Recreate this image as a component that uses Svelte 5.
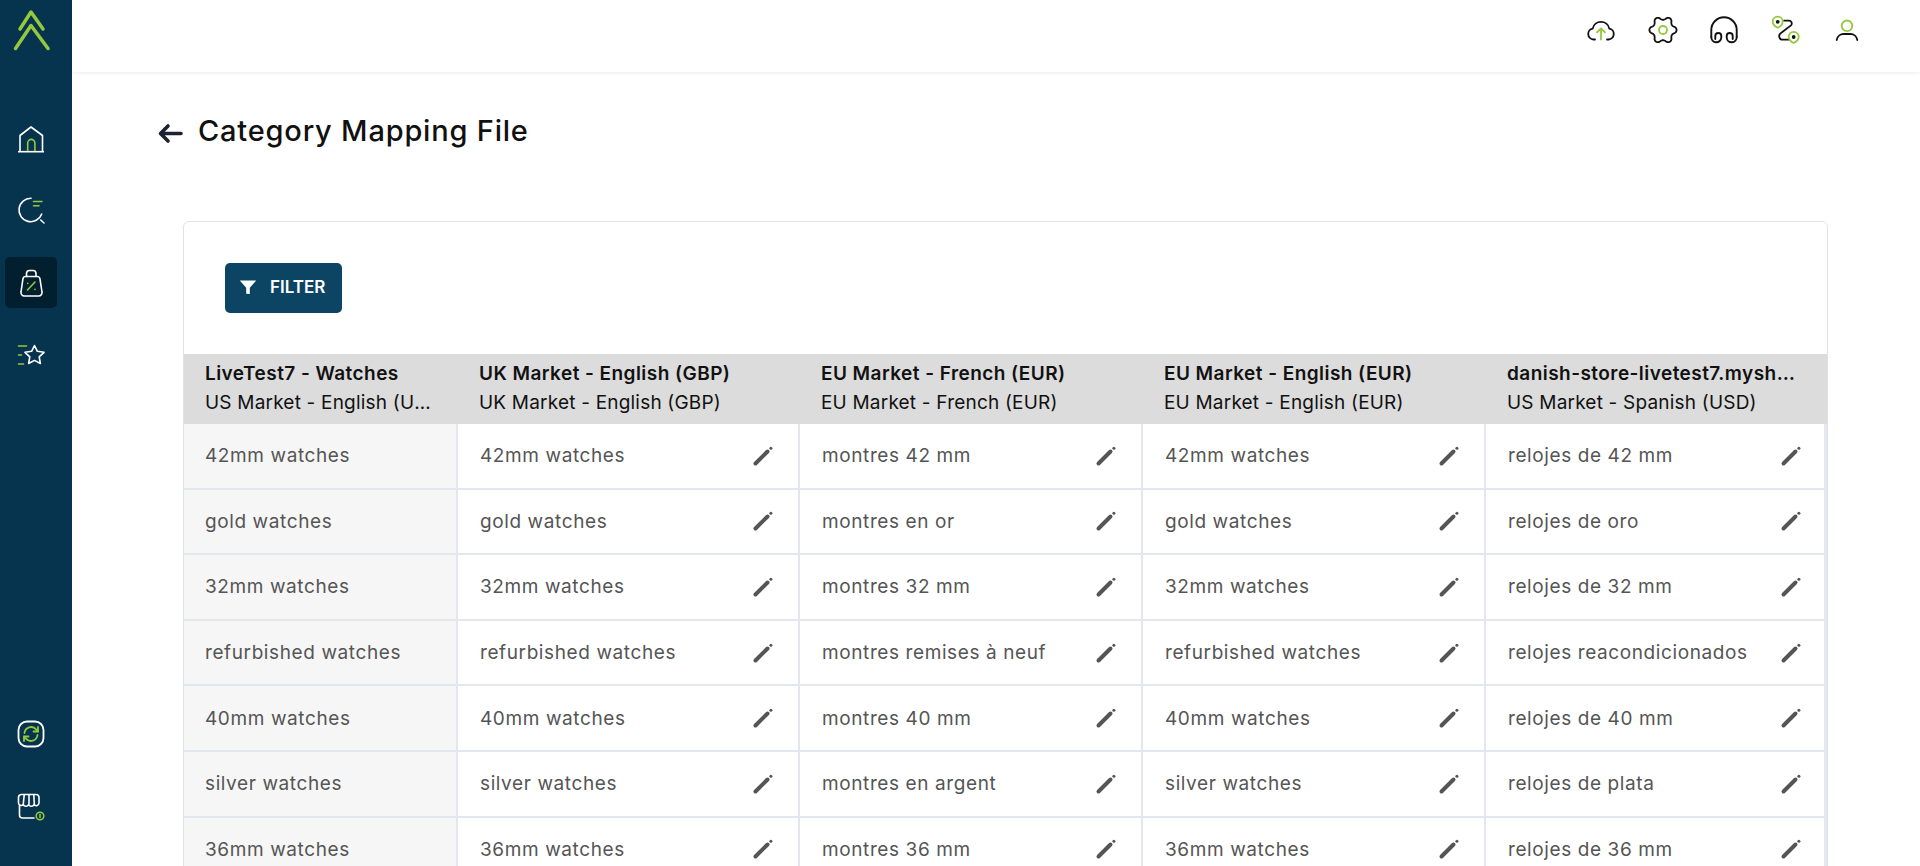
<script>
  const head = [
    ['LiveTest7 - Watches', 'US Market - English (USD)'],
    ['UK Market - English (GBP)', 'UK Market - English (GBP)'],
    ['EU Market - French (EUR)', 'EU Market - French (EUR)'],
    ['EU Market - English (EUR)', 'EU Market - English (EUR)'],
    ['danish-store-livetest7.myshopify.com', 'US Market - Spanish (USD)']
  ];
  const rows = [
    ['42mm watches', '42mm watches', 'montres 42 mm', '42mm watches', 'relojes de 42 mm'],
    ['gold watches', 'gold watches', 'montres en or', 'gold watches', 'relojes de oro'],
    ['32mm watches', '32mm watches', 'montres 32 mm', '32mm watches', 'relojes de 32 mm'],
    ['refurbished watches', 'refurbished watches', 'montres remises à neuf', 'refurbished watches', 'relojes reacondicionados'],
    ['40mm watches', '40mm watches', 'montres 40 mm', '40mm watches', 'relojes de 40 mm'],
    ['silver watches', 'silver watches', 'montres en argent', 'silver watches', 'relojes de plata'],
    ['36mm watches', '36mm watches', 'montres 36 mm', '36mm watches', 'relojes de 36 mm']
  ];
  // Cog outline: six soft lobes sampled around the centre of the 32 box.
  const cog = (() => {
    const pts = [];
    for (let i = 0; i < 144; i++) {
      const t = (i / 144) * Math.PI * 2;
      const c = Math.cos(6 * t);
      const r = 11.9 + 1.7 * Math.sign(c) * Math.pow(Math.abs(c), 0.75);
      pts.push(`${(16 + r * Math.cos(t)).toFixed(2)} ${(16 + r * Math.sin(t)).toFixed(2)}`);
    }
    return 'M' + pts.join('L') + 'Z';
  })();
</script>

<div class="shell">
  <aside class="side">
    <svg class="logo" width="62" height="60" viewBox="0 0 62 60" fill="none" stroke="#94c83d" stroke-width="3.500" stroke-linecap="round" stroke-linejoin="round">
      <path d="M20 29L31 12L43 29" />
      <path d="M15.500 48.500L31 25.500L48 48.500" />
    </svg>
    <nav class="nav">
      <div class="item">
        <svg width="32" height="32" viewBox="0 0 32 32" fill="none" stroke="#fff" stroke-width="1.600" stroke-linejoin="round">
          <path d="M5 28.500V12.500L16 4L27.500 12.500V28.500" />
          <path d="M3 28.700H29" />
          <path d="M12.700 28V20a3.600 3.600 0 0 1 7.200 0V28" stroke="#94c83d" />
        </svg>
      </div>
      <div class="item">
        <svg width="32" height="32" viewBox="0 0 32 32" fill="none" stroke="#fff" stroke-width="1.600" stroke-linecap="round">
          <path d="M16 3.300A11.700 11.700 0 1 0 26.700 19" />
          <path d="M25.700 25L29 28" />
          <path d="M18.500 6.500H27M18.500 10.700H24" stroke="#94c83d" />
        </svg>
      </div>
      <div class="item active">
        <svg width="32" height="32" viewBox="0 0 32 32" fill="none" stroke="#fff" stroke-width="1.600" stroke-linecap="round" stroke-linejoin="round">
          <path d="M11.500 9.500V6.500a3 3 0 0 1 3-3h3.500a3 3 0 0 1 3 3v3" />
          <path d="M10.500 9.500H22.500a2.500 2.500 0 0 1 2.400 2L27 25a3.400 3.400 0 0 1-3.300 4H9.300A3.400 3.400 0 0 1 6 25L8 11.500a2.500 2.500 0 0 1 2.500-2Z" />
          <path d="M12.500 23L20 15M12.700 16.400v.1M20 22.400v.1" stroke="#94c83d" />
        </svg>
      </div>
      <div class="item">
        <svg width="32" height="32" viewBox="0 0 32 32" fill="none" stroke="#fff" stroke-width="1.600" stroke-linecap="round" stroke-linejoin="round">
          <path d="M19.500 6.500L22.400 12.300L29 13.300L24.200 17.900L25.400 24.500L19.500 21.400L13.600 24.500L14.800 17.900L10 13.300L16.600 12.300Z" />
          <path d="M3.500 7H11.500M3.500 16H6.500M3.500 25H8.500" stroke="#94c83d" />
        </svg>
      </div>
    </nav>
    <div class="nav bottom">
      <div class="item">
        <svg width="32" height="32" viewBox="0 0 32 32" fill="none" stroke="#fff" stroke-width="1.800" stroke-linecap="round" stroke-linejoin="round">
          <rect x="3.500" y="3.500" width="25" height="25" rx="8.500" />
          <g stroke="#94c83d">
            <path d="M9.500 15a6.600 6.600 0 0 1 11.600-3.600L23 13.500" />
            <path d="M23 9V13.500H18.500" />
            <path d="M22.500 17a6.600 6.600 0 0 1-11.600 3.600L9 18.500" />
            <path d="M9 23V18.500H13.500" />
          </g>
        </svg>
      </div>
      <div class="item">
        <svg width="32" height="32" viewBox="0 0 32 32" fill="none" stroke="#fff" stroke-width="1.600" stroke-linecap="round" stroke-linejoin="round">
          <path d="M6 3.500H21a3 3 0 0 1 3 3V12a2.800 2.800 0 0 1-5 1.600 3 3 0 0 1-5.400 0 3 3 0 0 1-5.300 0A2.800 2.800 0 0 1 3.500 12V6.500a3 3 0 0 1 2.500-3Z" />
          <path d="M9.200 3.800L8.300 13M14 3.800V13M18.800 3.800L19.300 13" />
          <path d="M4.500 14.500V24a3 3 0 0 0 3 3H19" />
          <circle cx="25" cy="25" r="3.800" stroke="#94c83d" />
          <path d="M25 23.500V26.500" stroke="#94c83d" />
        </svg>
      </div>
    </div>
  </aside>

  <div class="main">
    <header class="top">
      <svg width="32" height="32" viewBox="0 0 32 32" fill="none" stroke="#111" stroke-width="1.800" stroke-linecap="round" stroke-linejoin="round">
        <path d="M10 25.500H8.500a5.500 5.500 0 0 1-.8-10.900 8.500 8.500 0 0 1 16.600 0 5.500 5.500 0 0 1-.8 10.900H22" />
        <path d="M16 25.500V14.500M12 18.400L16 14.500L20 18.400" stroke="#94c83d" />
      </svg>
      <svg width="32" height="32" viewBox="0 0 32 32" fill="none" stroke="#111" stroke-width="1.800" stroke-linejoin="round">
        <path d={cog} />
        <circle cx="16" cy="16" r="4" stroke="#94c83d" />
      </svg>
      <svg width="32" height="32" viewBox="0 0 32 32" fill="none" stroke="#111" stroke-width="1.900" stroke-linecap="round" stroke-linejoin="round">
        <path d="M3.300 23V16a12.700 12.700 0 0 1 25.400 0V23" />
        <path d="M3.300 23a5 5 0 0 0 10 .5V22a3 3 0 0 0-6 0V25" />
        <path d="M28.700 23a5 5 0 0 1-10 .5V22a3 3 0 0 1 6 0V25" />
      </svg>
      <svg width="32" height="32" viewBox="0 0 32 32" fill="none" stroke="#111" stroke-width="1.800" stroke-linecap="round" stroke-linejoin="round">
        <path d="M14 6.700H19a2.800 2.800 0 0 1 2 4.700L11 19a3.600 3.600 0 0 0 2 6.700H19" />
        <path d="M7.700 2.700c2.900 0 5 2.200 5 4.900 0 2.800-2.800 5.200-5 6.200-2.200-1-5-3.400-5-6.200 0-2.700 2.100-4.900 5-4.900Z" stroke="#94c83d" fill="#fff" />
        <circle cx="7.700" cy="7.800" r="1.900" fill="#111" stroke="none" />
        <path d="M23.700 17.900c2.900 0 5 2.200 5 4.900 0 2.800-2.800 5.200-5 6.200-2.200-1-5-3.400-5-6.200 0-2.700 2.100-4.900 5-4.900Z" stroke="#94c83d" fill="#fff" />
        <circle cx="23.700" cy="23" r="1.900" fill="#111" stroke="none" />
      </svg>
      <svg width="32" height="32" viewBox="0 0 32 32" fill="none" stroke="#111" stroke-width="1.800" stroke-linecap="round" stroke-linejoin="round">
        <circle cx="16" cy="11.800" r="5.300" stroke="#94c83d" />
        <path d="M5.700 26a7 7 0 0 1 7-6h6.600a7 7 0 0 1 7 6" />
      </svg>
    </header>

    <div class="content">
      <div class="title-row">
        <svg class="back" width="28" height="28" viewBox="0 0 28 28" fill="none" stroke="#1c2230" stroke-width="3.600" stroke-linecap="round" stroke-linejoin="round">
          <path d="M25 14.500H5M12 7L4.500 14.500L12 22" />
        </svg>
        <h1>Category Mapping File</h1>
      </div>

      <section class="card">
        <div class="bar">
          <button class="filter">
            <svg width="18" height="18" viewBox="0 0 18 18" fill="#fff"><path d="M.8 2.500H17.200L10.800 9.800V16L7.200 15.800V9.800Z" /></svg>
            FILTER
          </button>
        </div>
        <div class="table">
          <div class="row headrow">
            {#each head as h, i}
              <div class="th" class:first={i === 0} class:last={i === 4}>
                <div class="b">{h[0]}</div>
                <div class="s">{h[1]}</div>
              </div>
            {/each}
          </div>
          {#each rows as r}
            <div class="row">
              {#each r as c, i}
                <div class="td" class:first={i === 0} class:last={i === 4}>
                  <span class="v">{c}</span>
                  {#if i > 0}
                    <svg class="pen" width="24" height="24" viewBox="0 0 24 24" fill="none" stroke="#555" stroke-linecap="round"><path d="M4.500 19.500L16.500 7.500" stroke-width="4" /><circle cx="19.900" cy="4.200" r="1.500" fill="#555" stroke="none" /></svg>
                  {/if}
                </div>
              {/each}
            </div>
          {/each}
        </div>
      </section>
    </div>
  </div>
</div>

<style>
  :global(html), :global(body) { margin: 0; height: 100%; overflow: hidden; background: #fff; }
  .shell { display: flex; height: 866px; overflow: hidden; font-family: Inter, "Noto Sans", sans-serif; }
  .side { width: 72px; flex: none; background: #06344e; display: flex; flex-direction: column; }
  .logo { flex: none; display: block; }
  .nav { display: flex; flex-direction: column; align-items: center; gap: 21px; padding-top: 53px; }
  .nav.bottom { margin-top: auto; padding-top: 0; padding-bottom: 34px; gap: 22px; }
  .item { width: 52px; height: 51px; border-radius: 5px; display: flex; align-items: center; justify-content: center; margin-left: -10px; }
  .item.active { background: #021f2f; }
  .main { flex: 1; min-width: 0; display: flex; flex-direction: column; }
  .top { height: 72px; flex: none; box-sizing: border-box; box-shadow: 0 1px 4px rgba(0,0,0,.08); display: flex; align-items: center; justify-content: flex-end; gap: 29.500px; padding: 0 57px 12px 0; }
  .content { padding: 0 92px 0 86px; }
  .title-row { display: flex; align-items: center; gap: 14px; height: 60px; margin-top: 28px; }
  .back { margin-top: 5px; margin-left: -2px; flex: none; }
  h1 { margin: 1px 0 0; font-size: 29px; font-weight: 500; color: #111; letter-spacing: .8px; line-height: 40px; }
  .card { margin: 61px 0 0 25px; border: 1px solid #dfe3e8; border-radius: 6px 6px 0 0; }
  .bar { height: 132px; box-sizing: border-box; padding: 41px 0 0 41px; }
  .filter { display: flex; align-items: center; gap: 13px; height: 50px; width: 117px; box-sizing: border-box; padding: 0 0 2px 14px; border: none; border-radius: 5px; background: #0c4563; color: #fff; font: 600 17px Inter, sans-serif; }
  .table { display: flex; flex-direction: column; }
  .row { display: grid; grid-template-columns: 274px 342px 343px 343px 1fr; height: 65.600px; box-sizing: border-box; border-bottom: 2px solid #e4e8ee; }
  .headrow { height: 70px; background: #dcdcdc; border-bottom: 0; }
  .th { padding: 5px 20px 0 21px; min-width: 0; font-size: 19px; line-height: 29px; color: #111; }
  .th.first { padding-right: 24px; }
  .th.last { padding-right: 26px; }
  .b, .s { white-space: nowrap; overflow: hidden; text-overflow: ellipsis; }
  .b { font-weight: 600; letter-spacing: .45px; }
  .s { letter-spacing: .2px; }
  .td { display: flex; align-items: center; justify-content: space-between; padding: 0 23px 0 22px; border-right: 2px solid #e4e8ee; color: #555; font-size: 19px; letter-spacing: .6px; min-width: 0; }
  .td.first { background: #f6f6f6; padding-left: 21px; }
  .td.last { border-right-width: 3px; padding-right: 21px; }
  .pen { flex: none; }
</style>
